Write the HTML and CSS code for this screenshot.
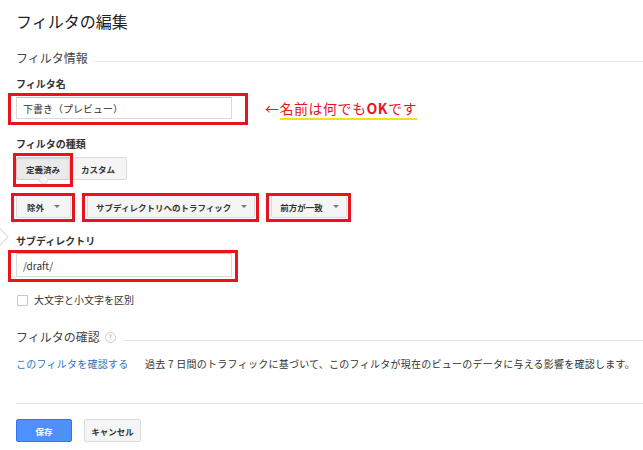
FILE: index.html
```html
<!DOCTYPE html>
<html lang="ja">
<head>
    <meta charset="UTF-8">
    <title>フィルタの編集</title>
    <link rel="stylesheet" href="styles.css">
</head>
<body>
    <div class="page">
        <h1 class="title">フィルタの編集</h1>

        <div class="section-head"><span>フィルタ情報</span></div>

        <div class="label label-first">フィルタ名</div>
        <div class="name-row">
            <div class="marked mark-name">
                <input type="text" class="text-input name-input" value="下書き（プレビュー）">
            </div>
            <span class="note">←<span class="note-line">名前は何でも<b>OK</b>です</span></span>
        </div>

        <div class="label label-type">フィルタの種類</div>
        <div class="segment">
            <div class="marked mark-preset">
                <button class="seg-btn active">定義済み</button>
            </div>
            <button class="seg-btn">カスタム</button>
        </div>

        <div class="dropdowns">
            <div class="marked mark-drop">
                <button class="drop-btn drop-wide">除外<span class="caret"></span></button>
            </div>
            <div class="marked mark-drop">
                <button class="drop-btn">サブディレクトリへのトラフィック<span class="caret"></span></button>
            </div>
            <div class="marked mark-drop">
                <button class="drop-btn">前方が一致<span class="caret"></span></button>
            </div>
        </div>

        <div class="subdir">
            <span class="notch"></span>
            <div class="label label-sub">サブディレクトリ</div>
            <div class="marked mark-sub">
                <input type="text" class="text-input sub-input" value="/draft/">
            </div>
        </div>

        <label class="check-row">
            <span class="checkbox"></span>
            大文字と小文字を区別
        </label>

        <div class="section-head section-verify">
            <span>フィルタの確認</span>
            <span class="help">?</span>
        </div>

        <div class="verify-row">
            <a href="#" class="link">このフィルタを確認する</a>
            <span class="verify-text">過去 7 日間のトラフィックに基づいて、このフィルタが現在のビューのデータに与える影響を確認します。</span>
        </div>

        <div class="separator"></div>

        <div class="actions">
            <button class="btn-save">保存</button>
            <button class="btn-cancel">キャンセル</button>
        </div>
    </div>
</body>
</html>
```

FILE: styles.css
```css
:root {
    --text: #333;
    --muted: #555;
    --rule: #e5e5e5;
    --mark: #e8131f;
}

body {
    margin: 0;
    background: #fff;
    color: var(--text);
    font-family: "Noto Sans CJK JP", sans-serif;
    overflow: hidden;
}

.page {
    padding: 10px 0 0 16px;
}

.title {
    margin: 0;
    font-size: 16px;
    line-height: 22px;
    font-weight: normal;
    color: #222;
}

.section-head {
    display: flex;
    align-items: center;
    margin-top: 18px;
    font-size: 12px;
    line-height: 16px;
    color: #444;
}

.section-head::after {
    content: "";
    flex: 1;
    height: 1px;
    background: var(--rule);
    align-self: flex-end;
    margin: 0 0 4px 7px;
}

.section-verify {
    margin-top: 22px;
}

.section-verify::after {
    margin-left: 8px;
}

.help {
    width: 9px;
    height: 9px;
    margin-left: 5px;
    border: 1px solid #ccc;
    border-radius: 50%;
    font-size: 7px;
    line-height: 9px;
    text-align: center;
    color: #aaa;
}

.label {
    font-size: 10px;
    line-height: 14px;
    font-weight: bold;
    color: #333;
}

.label-first { margin-top: 11px; }
.label-type { margin-top: 18px; }
.label-sub { margin-top: 16px; }

/* red annotation boxes */
.marked {
    position: relative;
}

.marked::after {
    content: "";
    position: absolute;
    border: 3px solid var(--mark);
    pointer-events: none;
}

.mark-name::after { top: -4px; right: -16px; bottom: -6px; left: -8px; }
.mark-preset::after { top: -4px; right: -3px; bottom: -7px; left: -3px; }
.mark-drop::after { top: -2px; right: -4px; bottom: -4px; left: -5px; }
.mark-sub::after { top: -3px; right: -6px; bottom: -5px; left: -8px; }

.name-row {
    display: flex;
    align-items: center;
    margin-top: 6px;
}

.text-input {
    display: block;
    box-sizing: border-box;
    width: 216px;
    height: 22px;
    padding: 0 6px;
    border: 1px solid #d9d9d9;
    border-top-color: #c0c0c0;
    border-radius: 1px;
    font-family: inherit;
    font-size: 10px;
    color: #333;
    outline: none;
}

.sub-input {
    height: 24px;
}

.note {
    margin-left: 33px;
    font-size: 14px;
    line-height: 16px;
    color: var(--mark);
    letter-spacing: 0.5px;
}

.note b {
    font-weight: bold;
}

.note-line {
    border-bottom: 2px solid #f2e01a;
}

.segment {
    display: flex;
    margin-top: 6px;
}

.seg-btn {
    height: 23px;
    padding: 0 9px;
    border: 1px solid #dcdcdc;
    background: #f5f5f5;
    font-family: inherit;
    font-size: 8.5px;
    font-weight: bold;
    color: #333;
    border-radius: 2px 0 0 2px;
}

.segment > .seg-btn {
    padding: 0 11px;
    border-left: none;
    border-radius: 0 2px 2px 0;
}

.seg-btn.active {
    position: relative;
    display: block;
    background: #eaeaea;
    border-color: #cfcfcf;
    box-shadow: inset 0 1px 2px rgba(0,0,0,0.1);
}

.seg-btn.active::after {
    content: "";
    position: absolute;
    left: 50%;
    bottom: -5px;
    width: 6px;
    height: 6px;
    margin-left: -3px;
    background: #f2f2f2;
    border-right: 1px solid #ddd;
    border-bottom: 1px solid #ddd;
    transform: rotate(45deg);
}

.dropdowns {
    display: flex;
    gap: 16px;
    margin-top: 15px;
}

.drop-btn {
    display: flex;
    align-items: center;
    height: 23px;
    padding: 0 7px 0 8px;
    border: 1px solid #dcdcdc;
    border-radius: 2px;
    background: #f5f5f5;
    font-family: inherit;
    font-size: 8.5px;
    font-weight: bold;
    color: #333;
}

.drop-wide {
    padding: 0 10px 0 10px;
}

.caret {
    margin-left: 10px;
    border-left: 3px solid transparent;
    border-right: 3px solid transparent;
    border-top: 3px solid #777;
}

.subdir {
    position: relative;
}

.subdir .marked {
    margin-top: 5px;
    width: 216px;
}

.notch {
    position: absolute;
    top: -4px;
    left: -24px;
    width: 12px;
    height: 12px;
    border: 1px solid #ddd;
    background: #fff;
    transform: rotate(45deg);
}

.check-row {
    display: flex;
    align-items: center;
    margin-top: 16px;
    font-size: 10px;
    line-height: 14px;
    color: #333;
}

.checkbox {
    width: 9px;
    height: 9px;
    margin: 0 6px 0 1px;
    border: 1px solid #c6c6c6;
    border-radius: 1px;
    background: #fff;
}

.verify-row {
    margin-top: 12px;
    font-size: 10px;
    line-height: 14px;
    letter-spacing: 0.25px;
    white-space: nowrap;
}

.link {
    color: #2f72b8;
    text-decoration: none;
    margin-right: 14px;
}

.verify-text {
    color: #333;
}

.separator {
    margin-top: 32px;
    height: 1px;
    background: var(--rule);
}

.actions {
    display: flex;
    gap: 12px;
    margin-top: 15px;
}

.btn-save,
.btn-cancel {
    height: 23px;
    border-radius: 2px;
    font-family: inherit;
    font-size: 8.5px;
    font-weight: bold;
}

.btn-save {
    width: 56px;
    border: 1px solid #3079ed;
    background: #4d90fe;
    color: #fff;
}

.btn-cancel {
    width: 57px;
    border: 1px solid #dcdcdc;
    background: #f5f5f5;
    color: #333;
}
```
